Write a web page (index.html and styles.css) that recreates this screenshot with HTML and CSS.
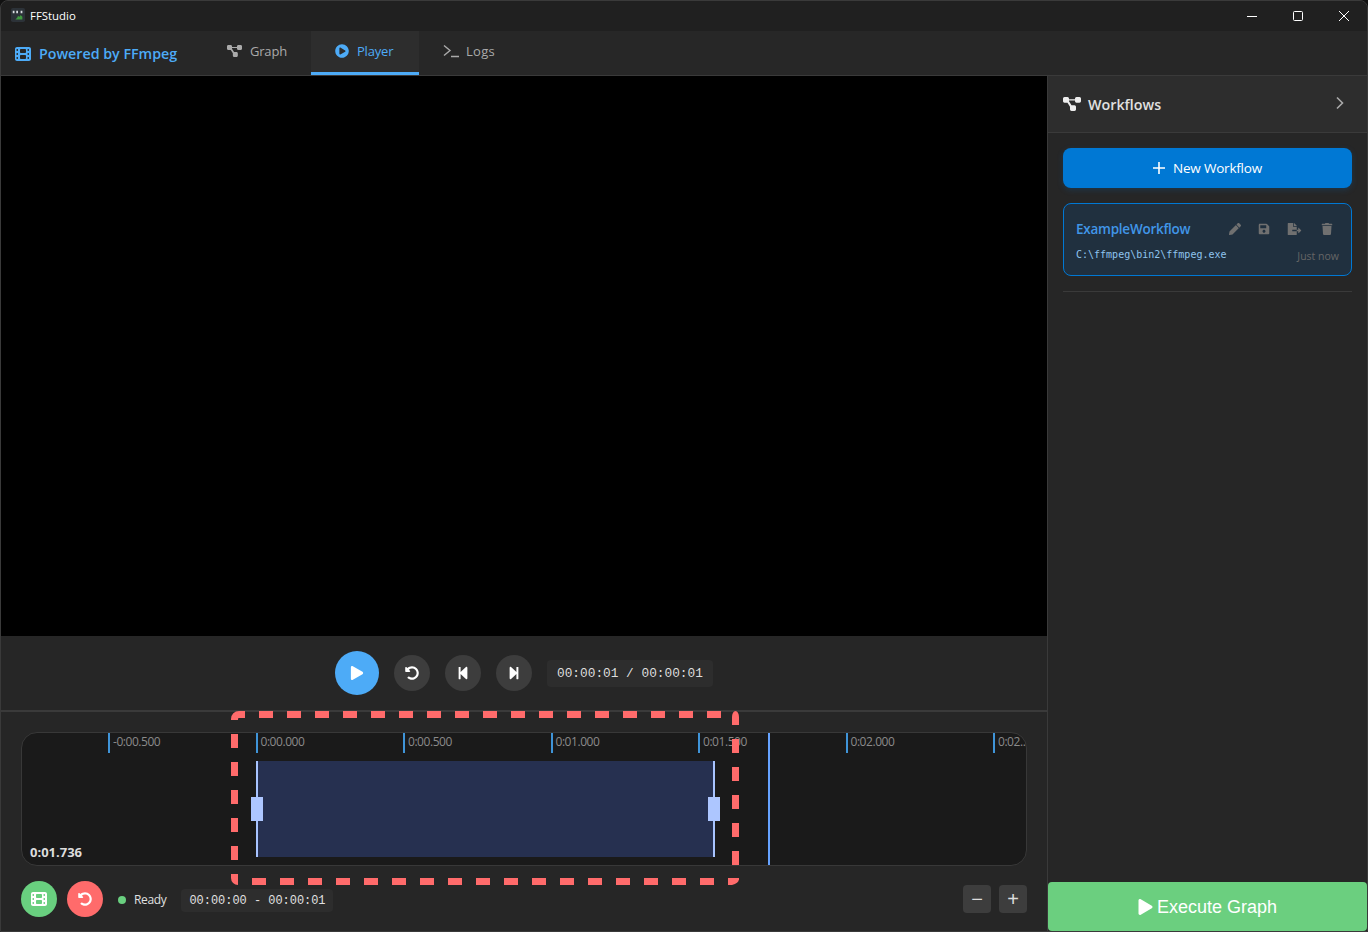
FILE: index.html
```html
<!DOCTYPE html>
<html lang="en">
<head>
    <meta charset="UTF-8">
    <meta name="viewport" content="width=device-width, initial-scale=1.0">
    <title>FFStudio</title>
    <link rel="stylesheet" href="styles.css">
</head>
<body>

    <svg class="defs" aria-hidden="true">
        <symbol id="i-film" viewBox="0 0 512 512"><path fill-rule="evenodd" d="M0 96C0 60.7 28.7 32 64 32H448c35.3 0 64 28.7 64 64V416c0 35.3-28.7 64-64 64H64c-35.3 0-64-28.7-64-64V96zM48 368v32c0 8.8 7.2 16 16 16H80c8.8 0 16-7.2 16-16V368c0-8.8-7.2-16-16-16H64c-8.8 0-16 7.2-16 16zm368-16c-8.8 0-16 7.2-16 16v32c0 8.8 7.2 16 16 16h16c8.8 0 16-7.2 16-16V368c0-8.8-7.2-16-16-16H416zM48 240v32c0 8.8 7.2 16 16 16H80c8.8 0 16-7.2 16-16V240c0-8.8-7.2-16-16-16H64c-8.8 0-16 7.2-16 16zm368-16c-8.8 0-16 7.2-16 16v32c0 8.8 7.2 16 16 16h16c8.8 0 16-7.2 16-16V240c0-8.8-7.2-16-16-16H416zM48 112v32c0 8.8 7.2 16 16 16H80c8.8 0 16-7.2 16-16V112c0-8.8-7.2-16-16-16H64c-8.8 0-16 7.2-16 16zM416 96c-8.8 0-16 7.2-16 16v32c0 8.8 7.2 16 16 16h16c8.8 0 16-7.2 16-16V112c0-8.8-7.2-16-16-16H416zM160 128v64c0 17.7 14.3 32 32 32H320c17.7 0 32-14.3 32-32V128c0-17.7-14.3-32-32-32H192c-17.7 0-32 14.3-32 32zm32 160c-17.7 0-32 14.3-32 32v64c0 17.7 14.3 32 32 32H320c17.7 0 32-14.3 32-32V320c0-17.7-14.3-32-32-32H192z"/></symbol>
        <symbol id="i-diagram" viewBox="0 32 576 384" preserveAspectRatio="none"><path d="M0 80C0 53.5 21.5 32 48 32h96c26.5 0 48 21.5 48 48V96H384V80c0-26.5 21.5-48 48-48h96c26.5 0 48 21.5 48 48v64c0 26.5-21.5 48-48 48H432c-26.5 0-48-21.5-48-48V128H192v16c0 1.7-.1 3.4-.3 5L272 256h96c26.5 0 48 21.5 48 48v64c0 26.5-21.5 48-48 48H272c-26.5 0-48-21.5-48-48V304c0-1.7 .1-3.4 .3-5L144 192H48c-26.5 0-48-21.5-48-48V80z"/></symbol>
        <symbol id="i-play-circle" viewBox="0 0 512 512"><path d="M256 8C119 8 8 119 8 256s111 248 248 248 248-111 248-248S393 8 256 8zm115.7 272l-176 101c-15.8 8.8-35.7-2.5-35.7-21V152c0-18.4 19.8-29.8 35.7-21l176 107c16.4 9.2 16.4 32.9 0 42z"/></symbol>
        <symbol id="i-play" viewBox="0 0 448 512"><path d="M424.4 214.7L72.4 6.6C43.8-10.3 0 6.1 0 47.9V464c0 37.5 40.7 60.1 72.4 41.3l352-208c31.4-18.5 31.5-64.1 0-82.6z"/></symbol>
        <symbol id="i-undo" viewBox="0 0 512 512"><path d="M255.545 8c-66.269.119-126.438 26.233-170.86 68.685L48.971 40.971C33.851 25.851 8 36.559 8 57.941V192c0 13.255 10.745 24 24 24h134.059c21.382 0 32.09-25.851 16.971-40.971l-41.75-41.75c30.864-28.899 70.801-44.907 113.23-45.273 92.398-.798 170.283 73.977 169.484 169.442C423.236 348.009 349.816 424 256 424c-41.127 0-79.997-14.678-110.63-41.556-4.743-4.161-11.906-3.908-16.368.553L89.34 422.659c-4.872 4.872-4.631 12.815.482 17.433C133.798 479.813 192.074 504 256 504c136.966 0 247.999-111.033 248-247.998C504.001 119.193 392.354 7.755 255.545 8z"/></symbol>
        <symbol id="i-back" viewBox="0 0 448 512"><path d="M64 468V44c0-6.6 5.4-12 12-12h48c6.6 0 12 5.4 12 12v176.4l195.5-181C352.1 22.3 384 36.6 384 64v384c0 27.4-31.9 41.7-52.5 24.6L136 292.7V468c0 6.6-5.4 12-12 12H76c-6.6 0-12-5.4-12-12z"/></symbol>
        <symbol id="i-forward" viewBox="0 0 448 512"><path d="M384 44v424c0 6.6-5.4 12-12 12h-48c-6.6 0-12-5.4-12-12V291.6l-195.5 181C95.9 489.7 64 475.4 64 448V64c0-27.4 31.9-41.7 52.5-24.6L312 219.3V44c0-6.6 5.4-12 12-12h48c6.6 0 12 5.4 12 12z"/></symbol>
        <symbol id="i-pencil" viewBox="0 0 512 512"><path d="M497.9 142.1l-46.1 46.1c-4.7 4.7-12.3 4.7-17 0l-111-111c-4.7-4.7-4.7-12.3 0-17l46.1-46.1c18.7-18.7 49.1-18.7 67.9 0l60.1 60.1c18.8 18.7 18.8 49.1 0 67.9zM284.2 99.8L21.6 362.4.4 483.9c-2.9 16.4 11.4 30.6 27.8 27.8l121.5-21.3 262.6-262.6c4.7-4.7 4.7-12.3 0-17l-111-111c-4.8-4.7-12.4-4.7-17.1 0z"/></symbol>
        <symbol id="i-save" viewBox="0 0 448 512"><path d="M433.941 129.941l-83.882-83.882A48 48 0 0 0 316.118 32H48C21.49 32 0 53.49 0 80v352c0 26.51 21.49 48 48 48h352c26.51 0 48-21.49 48-48V163.882a48 48 0 0 0-14.059-33.941zM224 416c-35.346 0-64-28.654-64-64 0-35.346 28.654-64 64-64s64 28.654 64 64c0 35.346-28.654 64-64 64zm96-304.52V212c0 6.627-5.373 12-12 12H76c-6.627 0-12-5.373-12-12V108c0-6.627 5.373-12 12-12h228.52c3.183 0 6.235 1.264 8.485 3.515l3.48 3.48A11.996 11.996 0 0 1 320 111.48z"/></symbol>
        <symbol id="i-export" viewBox="0 0 576 512"><path d="M384 121.9c0-6.3-2.5-12.4-7-16.9L279.1 7c-4.5-4.5-10.6-7-17-7H256v128h128zM571 308l-95.7-96.4c-10.1-10.1-27.4-3-27.4 11.3V288h-64v64h64v65.2c0 14.3 17.3 21.4 27.4 11.3L571 332c6.6-6.6 6.6-17.4 0-24zm-379 28v-32c0-8.8 7.2-16 16-16h176V160H248c-13.2 0-24-10.8-24-24V0H24C10.7 0 0 10.7 0 24v464c0 13.3 10.7 24 24 24h336c13.3 0 24-10.7 24-24V352H208c-8.8 0-16-7.2-16-16z"/></symbol>
        <symbol id="i-trash" viewBox="0 0 448 512"><path d="M432 32H312l-9.4-18.7A24 24 0 0 0 281.1 0H166.8a23.72 23.72 0 0 0-21.4 13.3L136 32H16A16 16 0 0 0 0 48v32a16 16 0 0 0 16 16h416a16 16 0 0 0 16-16V48a16 16 0 0 0-16-16zM53.2 467a48 48 0 0 0 47.9 45h245.8a48 48 0 0 0 47.9-45L416 128H32z"/></symbol>
    </svg>

    <div class="window">
        <div class="titlebar">
            <svg class="app-icon" viewBox="0 0 16 16">
                <rect width="16" height="16" rx="2" fill="#2c3238"/>
                <path d="M2 3h2v3H2zM6 3h2v3H6zM11 3h2v3h-2z" fill="#d8dde0"/>
                <path d="M5 13l2-2 1-2 2 1 1-2 2 2v3z" fill="#3f9a3f"/>
            </svg>
            <span class="app-name">FFStudio</span>
            <div class="win-buttons">
                <svg viewBox="0 0 12 12"><path d="M1 6.5h10" stroke="#fff" fill="none"/></svg>
                <svg viewBox="0 0 12 12"><rect x="1.5" y="1.5" width="9" height="9" rx="1" stroke="#fff" fill="none"/></svg>
                <svg viewBox="0 0 12 12"><path d="M1 1l10 10M11 1L1 11" stroke="#fff" fill="none"/></svg>
            </div>
        </div>

        <div class="navbar">
            <div class="brand">
                <svg class="brand-icon"><use href="#i-film"/></svg>
                <span>Powered by FFmpeg</span>
            </div>
            <div class="tab">
                <svg class="tab-icon"><use href="#i-diagram"/></svg>
                <span>Graph</span>
            </div>
            <div class="tab tab-active">
                <svg class="tab-icon tab-icon-round"><use href="#i-play-circle"/></svg>
                <span>Player</span>
            </div>
            <div class="tab tab-logs">
                <svg class="tab-icon" viewBox="0 0 16 14"><path d="M1 1.5l6 5-6 5M8 12.5h8" stroke="currentColor" stroke-width="1.4" fill="none"/></svg>
                <span>Logs</span>
            </div>
        </div>

        <div class="main">
            <div class="player">
                <div class="video"></div>

                <div class="controls">
                    <button class="round round-play"><svg class="ic-14"><use href="#i-play"/></svg></button>
                    <button class="round"><svg class="ic-14"><use href="#i-undo"/></svg></button>
                    <button class="round"><svg class="ic-14"><use href="#i-back"/></svg></button>
                    <button class="round"><svg class="ic-14"><use href="#i-forward"/></svg></button>
                    <div class="time-box">00:00:01 / 00:00:01</div>
                </div>

                <div class="timeline-area">
                    <div class="timeline">
                        <div class="ticks">
                            <div class="tick">-0:00.500</div>
                            <div class="tick">0:00.000</div>
                            <div class="tick">0:00.500</div>
                            <div class="tick">0:01.000</div>
                            <div class="tick">0:01.500</div>
                            <div class="tick">0:02.000</div>
                            <div class="tick tick-last">0:02..</div>
                        </div>
                        <div class="selection">
                            <div class="handle handle-left"></div>
                            <div class="handle handle-right"></div>
                        </div>
                        <div class="playhead"></div>
                        <div class="current-time">0:01.736</div>
                    </div>

                    <div class="bottom-row">
                        <button class="round round-green"><svg class="ic-16"><use href="#i-film"/></svg></button>
                        <button class="round round-red"><svg class="ic-14"><use href="#i-undo"/></svg></button>
                        <div class="status"><span class="dot"></span>Ready</div>
                        <div class="range-box">00:00:00 - 00:00:01</div>
                        <div class="zoom-buttons">
                            <button class="zoom-btn">&minus;</button>
                            <button class="zoom-btn">+</button>
                        </div>
                    </div>

                    <!-- dashes are drawn side by side so they line up at the corners -->
                    <svg class="marquee" viewBox="0 0 508 174">
                        <g class="marquee-dashes">
                            <path d="M28 3.5H490"/>
                            <path d="M504.5 28V154"/>
                            <path d="M483 170.5H21"/>
                            <path d="M3.5 23V150"/>
                        </g>
                        <path class="marquee-corner" d="M3.5 9V8a4.5 4.5 0 0 1 4.5-4.5H14"/>
                        <path class="marquee-cap" d="M501 14V6a3.5 6 0 0 1 7 0v8z"/>
                        <path class="marquee-cap" d="M497 167h11a11 7 0 0 1-7 7h-4z"/>
                        <path class="marquee-cap" d="M0 163h7v11a7 7 0 0 1-7-7z"/>
                    </svg>
                </div>
            </div>

            <div class="sidebar">
                <div class="side-header">
                    <svg class="side-icon"><use href="#i-diagram"/></svg>
                    <span class="side-title">Workflows</span>
                    <svg class="chevron" viewBox="0 0 10 14"><path d="M2 1.5l5.5 5.5L2 12.5" stroke="currentColor" stroke-width="1.6" fill="none"/></svg>
                </div>
                <div class="side-body">
                    <button class="new-btn">
                        <svg viewBox="0 0 12 12"><path d="M6 0v12M0 6h12" stroke="#fff" stroke-width="1.6"/></svg>
                        New Workflow
                    </button>
                    <div class="card">
                        <div class="card-top">
                            <span class="card-name">ExampleWorkflow</span>
                            <div class="card-actions">
                                <svg><use href="#i-pencil"/></svg>
                                <svg><use href="#i-save"/></svg>
                                <svg class="ic-export"><use href="#i-export"/></svg>
                                <svg><use href="#i-trash"/></svg>
                            </div>
                        </div>
                        <div class="card-bottom">
                            <span class="card-path">C:\ffmpeg\bin2\ffmpeg.exe</span>
                            <span class="card-date">Just now</span>
                        </div>
                    </div>
                    <div class="divider"></div>
                </div>
                <button class="execute-btn"><svg><use href="#i-play"/></svg>Execute Graph</button>
            </div>
        </div>
    </div>

</body>
</html>
```

FILE: styles.css
```css
* {
    box-sizing: border-box;
}

html, body {
    margin: 0;
    height: 100%;
    background: #111;
    overflow: hidden;
}

body {
    font-family: "Open Sans", "Noto Sans", sans-serif;
    color: #e0e0e0;
}

svg {
    fill: currentColor;
    display: block;
}

.defs {
    width: 0;
    height: 0;
    position: absolute;
}

button {
    border: none;
    padding: 0;
    cursor: pointer;
    font-family: inherit;
}

.window {
    height: 932px;
    display: flex;
    flex-direction: column;
    border: 1px solid #3a3a3a;
    border-radius: 8px 8px 0 0;
    overflow: hidden;
    background: #262626;
}

/* title bar */
.titlebar {
    height: 30px;
    flex: none;
    display: flex;
    align-items: center;
    padding: 0 0 2px 10px;
    background: #202020;
}

.app-icon {
    width: 14px;
    height: 14px;
    margin-top: -1px;
}

.app-name {
    margin-left: 5px;
    font-size: 11.4px;
    color: #fff;
}

.win-buttons {
    margin: 2px 0 0 auto;
    display: flex;
}

.win-buttons svg {
    width: 46px;
    height: 30px;
    padding: 9px 17px;
}

/* nav bar */
.navbar {
    height: 45px;
    flex: none;
    display: flex;
    background: #272727;
    border-bottom: 1px solid #3a3a3a;
}

.brand {
    width: 202px;
    display: flex;
    align-items: center;
    padding: 1px 0 0 14px;
    gap: 8px;
    font-size: 14.25px;
    font-weight: 600;
    color: #4dabf7;
    white-space: nowrap;
}

.brand-icon {
    width: 16px;
    height: 16px;
}

.tab {
    width: 108px;
    display: flex;
    align-items: center;
    gap: 7px;
    height: 44px;
    padding: 0 0 2px 24px;
    font-size: 13px;
    letter-spacing: -0.2px;
    color: #aaa;
    border-bottom: 3px solid transparent;
}

.tab-icon {
    width: 15px;
    height: 12px;
    margin-right: 1px;
}

.tab-icon-round {
    width: 14px;
    height: 14px;
    margin: 0 1px;
}

.tab-logs {
    letter-spacing: 0.3px;
}

.tab-logs .tab-icon {
    width: 16px;
    height: 14px;
    margin-right: 0;
}

.tab-active {
    padding-left: 23px;
    color: #4dabf7;
    background: #2d2d2d;
    border-bottom-color: #4dabf7;
}

/* main area */
.main {
    flex: 1;
    min-height: 0;
    display: flex;
}

.player {
    width: 1046px;
    flex: none;
    display: flex;
    flex-direction: column;
}

.video {
    height: 560px;
    flex: none;
    background: #000;
}

.controls {
    height: 76px;
    flex: none;
    display: flex;
    align-items: center;
    gap: 15px;
    padding-left: 334px;
    border-bottom: 2px solid #3a3a3a;
}

.round {
    width: 36px;
    height: 36px;
    flex: none;
    border-radius: 50%;
    display: flex;
    align-items: center;
    justify-content: center;
    background: #3d3d3d;
    color: #fff;
}

.round-play {
    width: 44px;
    height: 44px;
    background: #4dabf7;
}

.round-green {
    background: #69cf7f;
}

.round-red {
    background: #ff6b6b;
}

.ic-14 {
    width: 14px;
    height: 14px;
}

.ic-16 {
    width: 16px;
    height: 16px;
}

.time-box {
    height: 27px;
    line-height: 27px;
    padding: 0 10px;
    font-family: "Liberation Mono", monospace;
    font-size: 12.8px;
    white-space: nowrap;
    color: #ddd;
    background: #2d2d2d;
    border-radius: 4px;
}

/* timeline */
.timeline-area {
    flex: 1;
    position: relative;
    padding: 20px 20px 0;
}

.timeline {
    height: 134px;
    position: relative;
    overflow: hidden;
    background: #1a1a1a;
    border: 1px solid #383838;
    border-radius: 16px;
}

.ticks {
    display: flex;
    padding-left: 86px;
}

.tick {
    flex: 0 0 147.5px;
    height: 20px;
    padding-left: 3px;
    border-left: 2px solid #3f94d8;
    font-size: 12px;
    line-height: 18px;
    color: #8a8a8a;
    letter-spacing: -0.45px;
    white-space: nowrap;
}

.tick-last {
    flex: 0 0 32px;
}

.selection {
    position: absolute;
    left: 234px;
    top: 28px;
    width: 459px;
    height: 96px;
    background: #263050;
    border-left: 2px solid #a8c4ff;
    border-right: 2px solid #a8c4ff;
}

.handle {
    position: absolute;
    top: 36px;
    width: 12px;
    height: 24px;
    background: #adc6ff;
}

.handle-left {
    left: -7px;
}

.handle-right {
    right: -7px;
}

.playhead {
    position: absolute;
    left: 746px;
    top: 0;
    bottom: 0;
    width: 2px;
    background: #66a3ff;
}

.current-time {
    position: absolute;
    left: 8px;
    bottom: 4px;
    font-size: 13px;
    font-weight: 700;
    color: #ddd;
}

.bottom-row {
    display: flex;
    align-items: center;
    height: 36px;
    margin-top: 15px;
    gap: 10px;
}

.status {
    display: flex;
    align-items: center;
    margin-left: 5px;
    padding-top: 1px;
    gap: 8px;
    font-size: 12px;
    letter-spacing: -0.35px;
}

.dot {
    width: 8px;
    height: 8px;
    border-radius: 50%;
    background: #69cf7f;
}

.range-box {
    width: 152px;
    height: 23px;
    line-height: 24px;
    margin: 2px 0 0 5px;
    padding: 0 8px;
    font-family: "Liberation Mono", monospace;
    font-size: 11.95px;
    white-space: nowrap;
    background: #2d2d2d;
    border-radius: 4px;
}

.zoom-buttons {
    margin-left: auto;
    display: flex;
    gap: 8px;
}

.zoom-btn {
    width: 28px;
    height: 28px;
    background: #3d3d3d;
    border-radius: 4px;
    color: #ddd;
    font-size: 20px;
    line-height: 26px;
    font-family: "Liberation Sans", sans-serif;
}

.marquee {
    position: absolute;
    left: 230px;
    top: -1px;
    width: 508px;
    height: 174px;
    fill: #ff6b6b;
}

.marquee-dashes path {
    fill: none;
    stroke: #ff6b6b;
    stroke-width: 7;
    stroke-dasharray: 14 14;
}

.marquee-corner {
    fill: none;
    stroke: #ff6b6b;
    stroke-width: 7;
}

/* sidebar */
.sidebar {
    flex: 1;
    display: flex;
    flex-direction: column;
    border-left: 1px solid #3a3a3a;
    background: #262626;
}

.side-header {
    height: 57px;
    flex: none;
    display: flex;
    align-items: center;
    padding: 0 22px 0 15px;
    background: #2d2d2d;
    border-bottom: 1px solid #3a3a3a;
}

.side-icon {
    width: 18px;
    height: 14px;
    color: #eee;
}

.side-title {
    margin-left: 7px;
    font-size: 14.3px;
    font-weight: 600;
    color: #e0e0e0;
}

.chevron {
    margin: -2px 0 0 auto;
    width: 10px;
    height: 14px;
    color: #aaa;
}

.side-body {
    flex: 1;
    padding: 15px 15px 0;
}

.new-btn {
    width: 289px;
    height: 40px;
    display: flex;
    align-items: center;
    justify-content: center;
    gap: 8px;
    font-size: 13.5px;
    color: #fff;
    background: #0078d4;
    border-radius: 8px;
    box-shadow: 0 2px 6px rgba(0, 120, 212, 0.2);
    letter-spacing: -0.2px;
}

.new-btn svg {
    width: 12px;
    height: 12px;
}

.card {
    width: 289px;
    height: 73px;
    margin-top: 15px;
    padding: 15px 12px 0;
    background: #20303f;
    border: 1px solid #0078d4;
    border-radius: 8px;
}

.card-top {
    display: flex;
    align-items: center;
    height: 20px;
}

.card-name {
    font-size: 13.5px;
    font-weight: 600;
    color: #4096e8;
    letter-spacing: -0.25px;
}

.card-actions {
    margin: 0 6px 0 auto;
    display: flex;
    align-items: center;
    color: #707070;
}

.card-actions svg {
    width: 12px;
    height: 12px;
    margin-left: 17px;
}

.card-actions .ic-export {
    width: 15px;
    margin: 0 19px 0 17px;
}

.card-actions .ic-export + svg {
    margin-left: 0;
}

.card-bottom {
    display: flex;
    justify-content: space-between;
    align-items: flex-end;
    margin-top: 10px;
}

.card-path {
    font-family: "DejaVu Sans Mono", monospace;
    font-size: 10px;
    color: #8fc4ee;
}

.card-date {
    font-size: 10.5px;
    color: #666;
    margin-bottom: -3px;
}

.divider {
    width: 289px;
    height: 1px;
    margin-top: 15px;
    background: #3a3a3a;
}

.execute-btn {
    height: 49px;
    flex: none;
    display: flex;
    align-items: center;
    justify-content: center;
    gap: 4px;
    padding-top: 1px;
    font-family: "Liberation Sans", sans-serif;
    font-size: 18px;
    color: #fff;
    background: #6bcf7f;
    border-radius: 4px;
}

.execute-btn svg {
    width: 15px;
    height: 16px;
}
```
